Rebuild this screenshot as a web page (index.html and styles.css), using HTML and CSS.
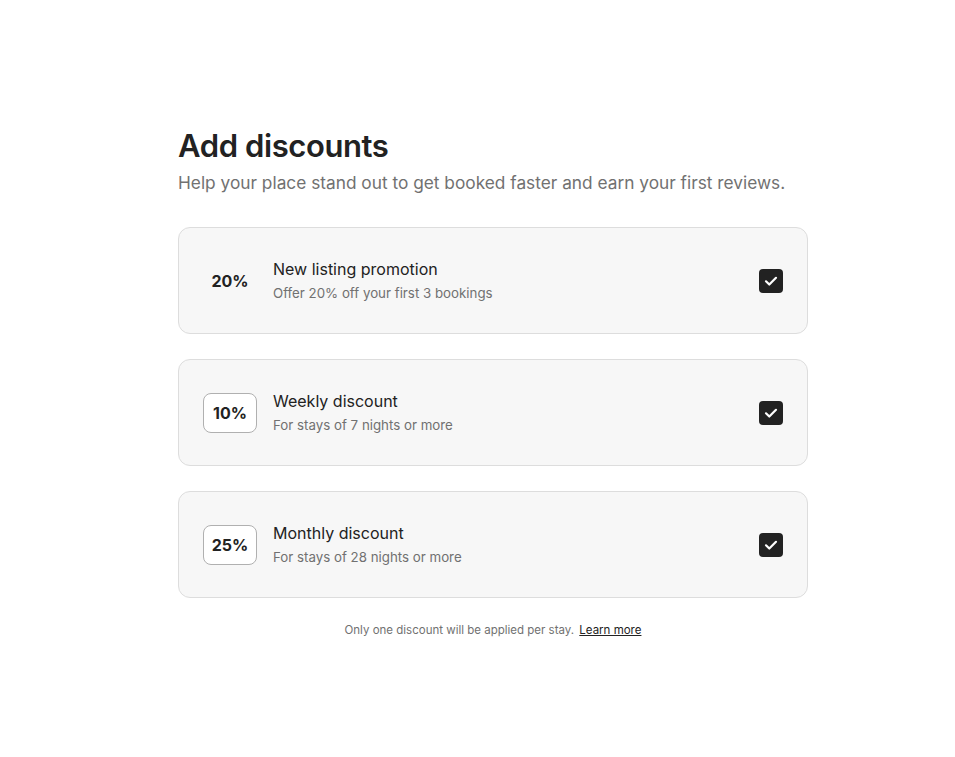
FILE: index.html
```html
<!DOCTYPE html>
<html lang="en">
<head>
<meta charset="utf-8">
<title>Add discounts</title>
<link rel="stylesheet" href="styles.css">
</head>
<body>
<main class="page">
  <h1 class="title">Add discounts</h1>
  <p class="subtitle">Help your place stand out to get booked faster and earn your first reviews.</p>

  <div class="list">
    <label class="card">
      <span class="pct pct-plain">20%</span>
      <span class="info">
        <span class="name">New listing promotion</span>
        <span class="desc">Offer 20% off your first 3 bookings</span>
      </span>
      <span class="check"><svg viewBox="0 0 24 24" width="24" height="24"><rect width="24" height="24" rx="4" fill="#222"/><path d="M7 12.3l3.3 3.2L17 8.8" fill="none" stroke="#fff" stroke-width="2.2" stroke-linecap="round" stroke-linejoin="round"/></svg></span>
    </label>

    <label class="card">
      <span class="pct pct-box">10%</span>
      <span class="info">
        <span class="name">Weekly discount</span>
        <span class="desc">For stays of 7 nights or more</span>
      </span>
      <span class="check"><svg viewBox="0 0 24 24" width="24" height="24"><rect width="24" height="24" rx="4" fill="#222"/><path d="M7 12.3l3.3 3.2L17 8.8" fill="none" stroke="#fff" stroke-width="2.2" stroke-linecap="round" stroke-linejoin="round"/></svg></span>
    </label>

    <label class="card">
      <span class="pct pct-box">25%</span>
      <span class="info">
        <span class="name">Monthly discount</span>
        <span class="desc">For stays of 28 nights or more</span>
      </span>
      <span class="check"><svg viewBox="0 0 24 24" width="24" height="24"><rect width="24" height="24" rx="4" fill="#222"/><path d="M7 12.3l3.3 3.2L17 8.8" fill="none" stroke="#fff" stroke-width="2.2" stroke-linecap="round" stroke-linejoin="round"/></svg></span>
    </label>
  </div>

  <p class="note">Only one discount will be applied per stay. <a href="#" class="link">Learn more</a></p>
</main>
</body>
</html>
```

FILE: styles.css
```css
* { box-sizing: border-box; }
html, body { margin: 0; padding: 0; background: #fff; }
body {
  font-family: "Inter", "Noto Sans", "Liberation Sans", sans-serif;
  color: #222;
}
.page {
  width: 630px;
  margin: 0 0 0 178px;
  padding-top: 126px;
}
.title {
  margin: 0;
  font-size: 31px;
  line-height: 40px;
  font-weight: 600;
  letter-spacing: -0.4px;
  color: #222;
}
.subtitle {
  margin: 4px 0 0;
  font-size: 17.3px;
  line-height: 26px;
  color: #717171;
  white-space: nowrap;
}
.list {
  margin-top: 31px;
  display: flex;
  flex-direction: column;
  gap: 25px;
}
.card {
  display: flex;
  align-items: center;
  height: 107px;
  padding: 0 24px;
  background: #f7f7f7;
  border: 1px solid #dddddd;
  border-radius: 12px;
}
.pct {
  width: 54px;
  height: 40px;
  display: flex;
  align-items: center;
  justify-content: center;
  font-size: 16px;
  font-weight: 700;
  color: #222;
  flex: none;
}
.pct-box {
  background: #fff;
  border: 1px solid #b0b0b0;
  border-radius: 8px;
}
.info {
  flex: 1;
  margin-left: 16px;
  display: flex;
  flex-direction: column;
  gap: 5px;
}
.name {
  font-size: 16px;
  line-height: 20px;
  color: #222;
}
.desc {
  font-size: 13.3px;
  line-height: 18px;
  color: #717171;
}
.check {
  width: 24px;
  height: 24px;
  flex: none;
  display: block;
}
.check svg { display: block; }
.note {
  margin: 24px 0 0;
  text-align: center;
  font-size: 11.5px;
  line-height: 16px;
  color: #717171;
}
.link {
  color: #222;
  text-decoration: underline;
  font-weight: 400;
  margin-left: 2px;
}
```
